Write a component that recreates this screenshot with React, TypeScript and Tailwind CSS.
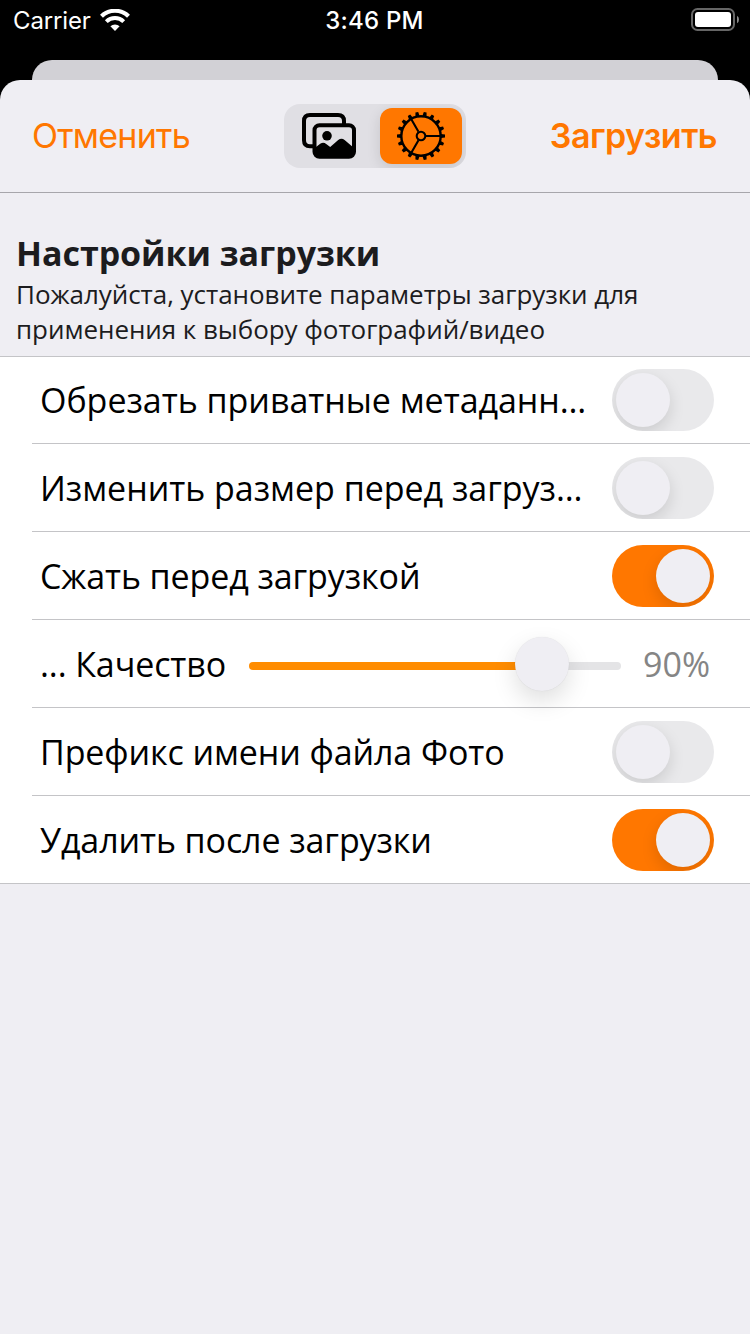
import React from "react";

const TEETH = Array.from({ length: 18 }, (_, i) => i * 20);

function WifiIcon() {
  return (
    <svg width="30" height="22" viewBox="0 0 30 22" fill="none" stroke="#fff">
      <path d="M1.5 7.2 A19.5 19.5 0 0 1 28.5 7.2" strokeWidth="4.2" />
      <path d="M6.3 12.6 A12.5 12.5 0 0 1 23.7 12.6" strokeWidth="4" />
      <path d="M10.4 17.3 A6.5 6.5 0 0 1 19.6 17.3 L15 22 Z" fill="#fff" stroke="none" />
    </svg>
  );
}

function BatteryIcon() {
  return (
    <svg width="50" height="24" viewBox="0 0 50 24" fill="none">
      <rect x="1" y="1" width="42" height="21" rx="5.5" stroke="#666" strokeWidth="2" />
      <rect x="4" y="4" width="36" height="15" rx="3" fill="#fff" />
      <path d="M46 7.7 Q48 9 48 11.5 Q48 14 46 15.3 Z" fill="#8a8a8a" />
    </svg>
  );
}

function PhotosIcon() {
  return (
    <svg width="54" height="46" viewBox="0 0 54 46" fill="none">
      <path
        d="M11 33.3 H8 Q2 33.3 2 27.3 V8 Q2 2 8 2 H36 Q42 2 42 8 V11"
        stroke="#000"
        strokeWidth="4"
      />
      <rect x="12.5" y="12.2" width="39.5" height="31.5" rx="5" stroke="#000" strokeWidth="4" />
      <circle cx="25" cy="22.8" r="4.8" fill="#000" />
      <path
        d="M12 35.5 L18.6 30.5 Q21.5 28.6 24.2 31 L28.2 34 L36.2 27 Q39.5 24.7 42.6 27 L52 35 V39.5 Q52 44.5 47 44.5 H17 Q12 44.5 12 39.5 Z"
        fill="#000"
      />
    </svg>
  );
}

function GearIcon() {
  return (
    <svg width="48" height="48" viewBox="-24 -24 48 48" fill="none" stroke="#000">
      <circle r="19.7" strokeWidth="2.4" />
      <circle r="4.3" strokeWidth="2.1" />
      <path d="M5 0H20M-2.5 -4.33L-10 -17.32M-2.5 4.33L-10 17.32" strokeWidth="2.1" />
      {TEETH.map((a) => (
        <path
          key={a}
          d="M20 -2.1 L24 -1.4 V1.4 L20 2.1 Z"
          fill="#000"
          stroke="none"
          transform={`rotate(${a})`}
        />
      ))}
    </svg>
  );
}

function Switch({ on }: { on: boolean }) {
  return (
    <div
      role="switch"
      aria-checked={on}
      className={`flex h-[62px] w-[102px] shrink-0 overflow-hidden rounded-full p-1 ${
        on ? "justify-end bg-[#ff7700]" : "justify-start bg-[#e9e9eb]"
      }`}
    >
      <div className="size-[54px] rounded-full bg-[#efeef3] shadow-[0_6px_16px_rgba(0,0,0,0.13)]" />
    </div>
  );
}

function Row({ children, last = false }: { children: React.ReactNode; last?: boolean }) {
  return (
    <div className={last ? "border-b border-[#c4c4c7]" : "pl-8"}>
      <div
        className={
          last
            ? "flex h-[87px] items-center pr-9 pl-10"
            : "flex h-[88px] items-center border-b border-[#c4c4c7] pr-9 pl-2"
        }
      >
        {children}
      </div>
    </div>
  );
}

function Label({ children, clipped = false }: { children: React.ReactNode; clipped?: boolean }) {
  return (
    <span
      className={`flex-1 whitespace-nowrap text-[34px] leading-[46px] text-black ${
        clipped ? "tracking-[-0.03px]" : "tracking-[-0.1px]"
      }`}
    >
      {children}
    </span>
  );
}

export default function App() {
  return (
    <div className="flex h-[1334px] w-[750px] flex-col overflow-hidden bg-black font-['Open_Sans','Noto_Sans',sans-serif]">
      <div className="grid h-[60px] grid-cols-3 items-start pr-[9px] pl-3 font-['Inter',sans-serif] text-white">
        <div className="flex items-start gap-[9px] pl-px">
          <span className="pt-1.5 text-[24px] leading-[30px] tracking-[-0.15px]">Carrier</span>
          <div className="pt-[9px]">
            <WifiIcon />
          </div>
        </div>
        <span className="pt-1.5 pr-1 text-center text-[24px] leading-[30px] font-medium tracking-[0.2px]">
          3:46 PM
        </span>
        <div className="flex justify-end pt-2">
          <BatteryIcon />
        </div>
      </div>
      <div className="mx-8 h-10 shrink-0 rounded-t-[20px] bg-[#d2d1d6]" />
      <div className="z-10 -mt-5 flex flex-1 flex-col rounded-t-[20px] bg-[#efeef3]">
        <header className="flex h-[113px] items-center justify-between border-b border-[#a7a6ab] px-8 font-['Inter',sans-serif] text-[34px] leading-10 text-[#ff7700]">
          <span className="w-[252px] tracking-[-0.75px]">Отменить</span>
          <div className="flex h-16 w-[182px] items-center justify-between overflow-hidden rounded-[16px] bg-[#e0dfe4] p-1">
            <div className="flex w-[82px] justify-center">
              <PhotosIcon />
            </div>
            <div className="flex h-14 w-[82px] items-center justify-center rounded-[12px] bg-[#ff7700] shadow-[0_4px_14px_rgba(0,0,0,0.12)]">
              <GearIcon />
            </div>
          </div>
          <span className="w-[252px] pr-px text-right font-semibold tracking-[-0.5px]">Загрузить</span>
        </header>
        <div className="h-[163px] px-4 pt-[37px] text-[#1c1c1e]">
          <h1 className="text-[34px] leading-[46px] font-bold tracking-[-0.05px]">
            Настройки загрузки
          </h1>
          <p className="pt-px text-[26px] leading-[35px] tracking-[-0.05px] whitespace-nowrap">
            Пожалуйста, установите параметры загрузки для
            <br />
            применения к выбору фотографий/видео
          </p>
        </div>
        <div className="bg-white shadow-[inset_0_1px_0_#c4c4c7]">
          <Row>
            <Label clipped>Обрезать приватные метаданн…</Label>
            <Switch on={false} />
          </Row>
          <Row>
            <Label clipped>Изменить размер перед загруз…</Label>
            <Switch on={false} />
          </Row>
          <Row>
            <Label>Сжать перед загрузкой</Label>
            <Switch on />
          </Row>
          <Row>
            <Label>... Качество</Label>
            <div className="flex h-[54px] w-[372px] items-center">
              <div className="mt-1 h-2 w-[270px] rounded-l-full bg-[#ff8c00]" />
              <div className="z-10 -mx-1 size-[54px] shrink-0 rounded-full bg-[#efeef3] shadow-[0_0_1px_rgba(0,0,0,0.12),0_10px_24px_rgba(0,0,0,0.13)]" />
              <div className="mt-1 h-2 flex-1 rounded-r-full bg-[#e4e4e6]" />
            </div>
            <span className="w-[93px] pr-1 text-right text-[34px] leading-[46px] text-[#858585]">
              90%
            </span>
          </Row>
          <Row>
            <Label>Префикс имени файла Фото</Label>
            <Switch on={false} />
          </Row>
          <Row last>
            <Label>Удалить после загрузки</Label>
            <Switch on />
          </Row>
        </div>
      </div>
    </div>
  );
}
